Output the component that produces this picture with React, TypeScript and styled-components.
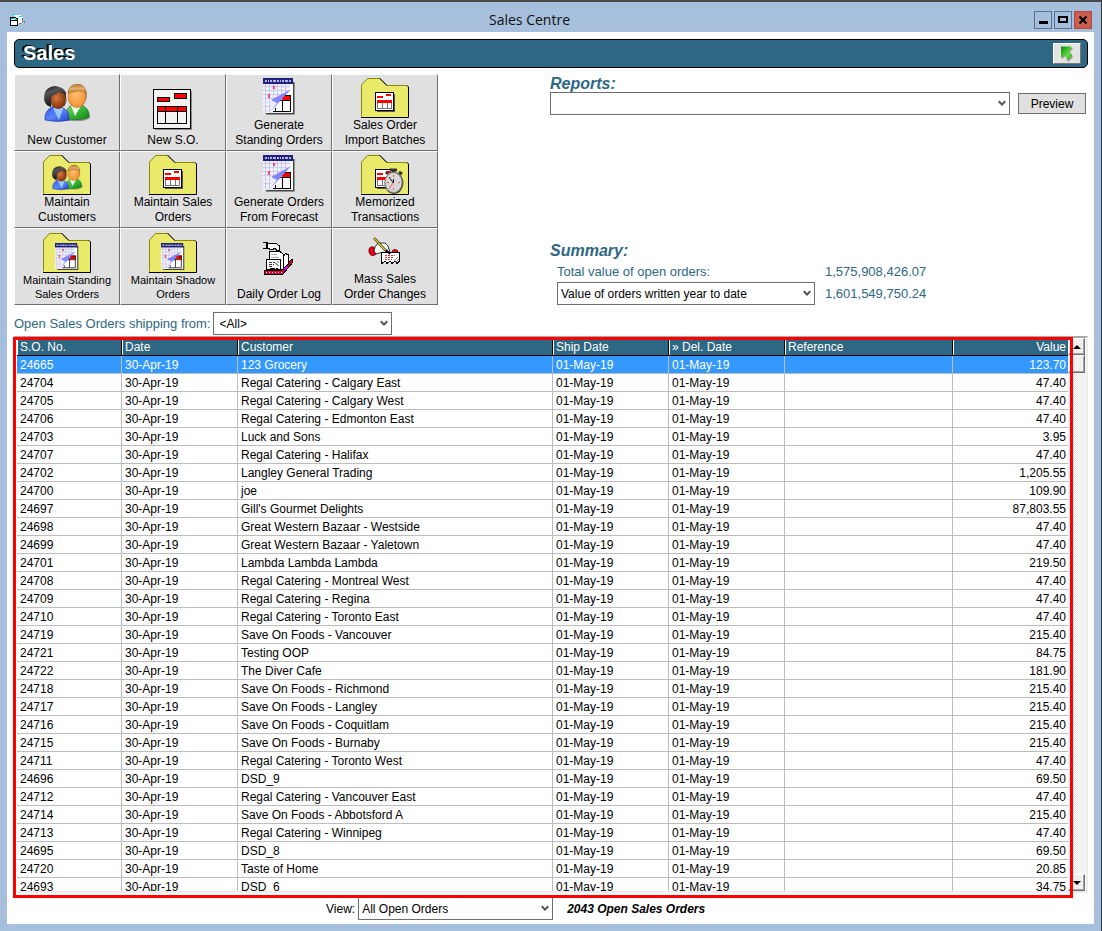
import React from 'react';
import styled, { createGlobalStyle } from 'styled-components';

const teal = '#2e6783';
const sans = '"Liberation Sans", Arial, sans-serif';

const GlobalStyle = createGlobalStyle`
  * { box-sizing: border-box; }
  body { margin: 0; font-family: ${sans}; font-size: 12px; color: #000; }
  button, select { font-family: inherit; font-size: inherit; color: inherit; margin: 0; padding: 0; }
`;

/* ---------- window frame ---------- */

const Window = styled.div`
  display: flex;
  flex-direction: column;
  height: 100vh;
  min-height: 600px;
  padding: 0 7px 7px;
  background: #a6bfdc;
  border-top: 2px solid #4a4a4a;
  border-right: 1px solid #3a3a3a;
`;

const TitleBar = styled.header`
  display: flex;
  align-items: center;
  height: 30px;
  padding: 6px 2px 0 3px;
  flex: none;
`;

const WindowTitle = styled.h1`
  flex: 1;
  margin: 0;
  text-align: center;
  font: 400 14px/20px "Open Sans", "Noto Sans", sans-serif;
  color: #111;
`;

const WindowButtons = styled.div`
  display: flex;
  gap: 2px;
`;

const WindowButton = styled.button<{ $close?: boolean }>`
  display: flex;
  align-items: center;
  justify-content: center;
  width: 18px;
  height: 18px;
  border: 1px solid ${p => (p.$close ? '#b04a40' : '#5b7390')};
  background: ${p => (p.$close ? '#cb5f4f' : '#a6bfdc')};
`;

const Content = styled.main`
  display: flex;
  flex-direction: column;
  flex: 1;
  min-height: 0;
  padding: 7px 6px 4px 7px;
  background: #fff;
`;

/* ---------- banner ---------- */

const Banner = styled.div`
  display: flex;
  align-items: center;
  justify-content: space-between;
  flex: none;
  height: 29px;
  padding: 0 6px 0 8px;
  border: 1px solid #000;
  border-radius: 5px;
  background: ${teal};
`;

const BannerTitle = styled.h2`
  margin: 0;
  padding-bottom: 2px;
  font-size: 20px;
  line-height: 24px;
  color: #fff;
  text-shadow: -1px -1px 0 #000, -2px -1px 0 #000;
`;

const BannerButton = styled.button`
  display: flex;
  align-items: center;
  justify-content: center;
  width: 28px;
  height: 21px;
  background: #e3e3e3;
  border: 1px solid;
  border-color: #fff #777 #777 #fff;
`;

/* ---------- upper part ---------- */

const Upper = styled.div`
  display: flex;
  flex: none;
  gap: 112px;
  padding: 6px 2px 0 0;
`;

const TileGrid = styled.nav`
  display: grid;
  grid-template-columns: repeat(4, 106px);
  grid-auto-rows: 77px;
`;

const Tile = styled.button`
  display: flex;
  flex-direction: column;
  align-items: center;
  padding: 2px 0 2px;
  background: #e0e0e0;
  border: 1px solid;
  border-color: #fff #6e6e6e #6e6e6e #fff;
`;

const TileIcon = styled.span<{ $small?: boolean }>`
  display: flex;
  flex: 1;
  align-items: center;
  min-height: 0;
  padding-top: ${p => (p.$small ? 2 : 0)}px;
`;

const TileLabel = styled.span<{ $small?: boolean }>`
  display: flex;
  flex-direction: column;
  padding-bottom: ${p => (p.$small ? 1 : 0)}px;
  font-size: ${p => (p.$small ? 11 : 12)}px;
  line-height: ${p => (p.$small ? 14 : 15)}px;
  white-space: nowrap;
`;

const SidePanel = styled.div`
  display: flex;
  flex-direction: column;
  justify-content: space-between;
  flex: 1;
  min-width: 0;
`;

const Heading = styled.h3`
  margin: 0;
  padding-top: 2px;
  font-size: 16px;
  line-height: 16px;
  font-style: italic;
  color: ${teal};
`;

const ReportRow = styled.div`
  display: flex;
  align-items: center;
  gap: 8px;
`;

const PreviewButton = styled.button`
  width: 68px;
  height: 21px;
  background: #e0e0e0;
  border: 1px solid #6e6e6e;
`;

const SummaryGrid = styled.div`
  display: grid;
  grid-template-columns: 258px auto;
  grid-template-rows: 18px 23px;
  column-gap: 10px;
  row-gap: 2px;
  justify-content: start;
  align-items: center;
  padding: 3px 0 0 7px;
  font-size: 13px;
  color: ${teal};
`;

const Amount = styled.output``;

/* ---------- drop-downs ---------- */

const SelectBox = styled.span<{ $width?: number }>`
  position: relative;
  display: block;
  ${p => (p.$width ? `width: ${p.$width}px;` : 'flex: 1;')}
  height: 23px;
  font-size: 12px;
  color: #000;
  svg {
    position: absolute;
    right: 4px;
    top: 8px;
    pointer-events: none;
  }
`;

const NativeSelect = styled.select<{ $inset?: number }>`
  appearance: none;
  display: block;
  width: 100%;
  height: 100%;
  padding: 0 18px 0 ${p => p.$inset ?? 3}px;
  border: 1px solid #6e6e6e;
  border-radius: 0;
  background: #fff;
`;

const FilterRow = styled.div`
  display: flex;
  flex: none;
  align-items: center;
  gap: 2px;
  padding: 7px 0 1px;
`;

const FilterLabel = styled.label`
  font-size: 13px;
  color: ${teal};
`;

/* ---------- order list ---------- */

const GridFrame = styled.section`
  position: relative;
  display: flex;
  flex: 1;
  min-height: 0;
  border: 2px solid;
  border-color: #a8a8a8 #ececec #ececec #a8a8a8;
  padding: 0 1px;
`;

const Highlight = styled.div`
  position: absolute;
  z-index: 2;
  top: -1px;
  left: -3px;
  right: 13px;
  bottom: -7px;
  border: 3px solid #ff0000;
  pointer-events: none;
`;

const TableView = styled.div`
  flex: 1;
  min-width: 0;
  overflow: hidden;
`;

const Table = styled.table`
  width: 100%;
  table-layout: fixed;
  border-collapse: separate;
  border-spacing: 0;
`;

const Col = styled.col<{ $width?: number }>`
  ${p => p.$width && `width: ${p.$width}px;`}
`;

const HeadCell = styled.th<{ $right?: boolean }>`
  height: 18px;
  padding: 2px 2px 0 3px;
  line-height: 15px;
  font-weight: 400;
  text-align: ${p => (p.$right ? 'right' : 'left')};
  color: #fff;
  background: ${teal};
  border-right: 1px solid #000;
  border-bottom: 1px solid #000;
  box-shadow: inset 1px 0 0 #fff;
  &:last-child { border-right: 0; }
`;

const Cell = styled.td<{ $right?: boolean }>`
  height: 18px;
  padding: 2px 2px 0 3px;
  line-height: 15px;
  white-space: nowrap;
  text-align: ${p => (p.$right ? 'right' : 'left')};
  border-right: 1px solid #bdbdbd;
  border-bottom: 1px solid #bdbdbd;
  &:last-child { border-right: 0; }
`;

const Row = styled.tr<{ $selected?: boolean }>`
  ${p => p.$selected && 'background: #3399ff; color: #fff;'}
`;

const ScrollTrack = styled.div`
  display: flex;
  flex-direction: column;
  width: 17px;
  background: repeating-conic-gradient(#e6e6e6 0 25%, #fff 0 50%) 0 0 / 2px 2px;
`;

const ScrollButton = styled.button`
  display: flex;
  align-items: center;
  justify-content: center;
  width: 17px;
  height: 17px;
  background: #f0f0f0;
  border: 1px solid;
  border-color: #fff #6e6e6e #6e6e6e #fff;
  box-shadow: inset -1px -1px 0 #a8a8a8;
`;

const ScrollThumb = styled.div`
  height: 18px;
  margin-bottom: auto;
  background: #f0f0f0;
  border: 1px solid;
  border-color: #fff #6e6e6e #6e6e6e #fff;
  box-shadow: inset -1px -1px 0 #a8a8a8;
`;

const Footer = styled.footer`
  display: flex;
  flex: none;
  align-items: center;
  gap: 3px;
  padding: 4px 0 0 312px;
`;

const OrderCount = styled.strong`
  padding-left: 11px;
  font-style: italic;
`;

/* ---------- drawings ---------- */

const Defs = () => (
  <svg width="0" height="0" style={{ position: 'absolute' }} aria-hidden="true">
    <defs>
      <pattern id="dither" width="2" height="2" patternUnits="userSpaceOnUse">
        <rect width="2" height="2" fill="#ffff00" />
        <rect width="1" height="1" fill="#d4d4d4" />
        <rect x="1" y="1" width="1" height="1" fill="#d4d4d4" />
      </pattern>
      <radialGradient id="skinDark" cx="0.4" cy="0.35" r="0.7">
        <stop offset="0" stopColor="#d9783c" />
        <stop offset="1" stopColor="#7a2b08" />
      </radialGradient>
      <radialGradient id="skinLight" cx="0.45" cy="0.4" r="0.7">
        <stop offset="0" stopColor="#ffc070" />
        <stop offset="1" stopColor="#f08a28" />
      </radialGradient>
      <linearGradient id="hairLight" x1="0" y1="0" x2="0" y2="1">
        <stop offset="0" stopColor="#b87420" />
        <stop offset="0.5" stopColor="#e0b070" />
        <stop offset="1" stopColor="#c08030" />
      </linearGradient>
      <linearGradient id="hairDark" x1="0" y1="0" x2="0.4" y2="1">
        <stop offset="0" stopColor="#151515" />
        <stop offset="0.35" stopColor="#555" />
        <stop offset="1" stopColor="#0c0c0c" />
      </linearGradient>
      <linearGradient id="shirtBlue" x1="0" y1="0" x2="1" y2="1">
        <stop offset="0" stopColor="#2f55e8" />
        <stop offset="0.5" stopColor="#5b86ff" />
        <stop offset="1" stopColor="#1d3fc8" />
      </linearGradient>
      <linearGradient id="shirtGreen" x1="0" y1="0" x2="1" y2="1">
        <stop offset="0" stopColor="#7fd36a" />
        <stop offset="0.6" stopColor="#2fae2f" />
        <stop offset="1" stopColor="#0d7a14" />
      </linearGradient>
      <linearGradient id="arrowGreen" x1="0" y1="0" x2="1" y2="1">
        <stop offset="0" stopColor="#0e8a0e" />
        <stop offset="0.6" stopColor="#5fe03a" />
        <stop offset="1" stopColor="#1d9a1d" />
      </linearGradient>
    </defs>
  </svg>
);

const PeopleShapes = () => (
  <g>
    <path d="M23 37 Q20 26 29 22 L39 22 Q46 25 46 34 Q40 38 30 37 Z" fill="#555" opacity="0.55" />
    <path d="M21 36 Q20 25 28 21 L38 21 Q45 24 45 33 Q38 37 21 35 Z" fill="url(#shirtGreen)" stroke="#1b6a1b" strokeWidth="0.6" />
    <path d="M27 22 L31 32 L37 22 Z" fill="#e8ffe8" />
    <path d="M42 6 Q44 12 41 18 L37 23 L39 10 Z" fill="#555" opacity="0.7" />
    <ellipse cx="33" cy="12.500" rx="9" ry="11" fill="url(#skinLight)" stroke="#b06a20" strokeWidth="0.6" />
    <path d="M24 9 Q25 0 34 0 Q42 1 42 9 Q38 6 33 7 Q27 8 24 9 Z" fill="url(#hairLight)" stroke="#8a5a18" strokeWidth="0.5" />
    <path d="M1 36 Q0 27 8 23 L17 23 Q26 26 25 36 Q14 39 1 36 Z" fill="url(#shirtBlue)" stroke="#1a2f9c" strokeWidth="0.6" />
    <path d="M9 24 L15 36 L19 24 Z" fill="#9cc8ff" />
    <path d="M0 14 Q0 3 11 2 Q21 3 22 10 L20 12 L9 12 L7 23 Q0 21 0 14 Z" fill="url(#hairDark)" />
    <path d="M8 12 Q12 10 15 8 Q18 10 21 10 Q23 24 14 25 Q6 24 7 14 Z" fill="url(#skinDark)" />
    <path d="M21 8 L22 17 L20 22" fill="none" stroke="#300" strokeWidth="0.8" />
  </g>
);

const PeopleIcon = () => (
  <svg width="47" height="42" viewBox="0 0 47 42"><PeopleShapes /></svg>
);

const OrderSheetIcon = () => (
  <svg width="40" height="52" viewBox="0 0 40 52" shapeRendering="crispEdges">
    <g transform="translate(0 10)">
      <path d="M2 40.500 H38.500 V2" fill="none" stroke="#8a8a8a" />
      <rect x="0.500" y="0.500" width="37" height="39" fill="#f3f3f3" stroke="#000" />
      <rect x="4.500" y="8.500" width="12" height="4" fill="#f00" stroke="#000" />
      <rect x="21.500" y="4.500" width="12" height="5" fill="#f00" stroke="#000" />
      <rect x="4.500" y="17.500" width="29" height="17" fill="#f3f3f3" stroke="#000" />
      <rect x="4.500" y="17.500" width="29" height="5" fill="#f00" stroke="#000" />
      <path d="M12.500 18 V35 M24.500 18 V35" stroke="#000" />
    </g>
  </svg>
);

const CalendarShapes = () => (
  <g>
    <path d="M3 35.500 H30.500 V4" fill="none" stroke="#444" strokeWidth="2" />
    <rect x="1" y="6" width="29" height="29" fill="#fff" />
    <rect x="0" y="6" width="27" height="29" fill="#ececfa" />
    <g stroke="#fff" strokeWidth="1">
      <path d="M0 10.500 H27 M0 14.500 H23 M0 18.500 H17 M0 22.500 H11 M0 26.500 H8 M0 30.500 H9 M0 34.500 H8" />
    </g>
    <g stroke="#c3c3ee" strokeWidth="1">
      <path d="M2.500 6 V35 M6.500 6 V35 M10.500 6 V22 M14.500 6 V19 M18.500 6 V17 M22.500 6 V14" />
      <path d="M0 8.500 H27 M0 12.500 H24 M0 16.500 H19 M0 20.500 H12 M0 28.500 H8" opacity="0.7" />
    </g>
    <path d="M29 11 L29 34 H8 Z" fill="#fff" />
    <rect x="19" y="17" width="9" height="5" fill="#f00" />
    <path d="M20 17.500 H28 M13 22.500 H28 M27.500 17 V33 M10 33.500 H28 M19.500 22 V33 M12.500 30 V33" fill="none" stroke="#000" />
    <path d="M28 11 L8 22 L14 25 L7 34 Z" fill="#8484ff" />
    <path d="M10 8 L12 11 M12 8 L10 11 M5 16 L7 20 M7 16 L5 20" stroke="#f03050" />
    <rect x="0" y="0" width="30" height="6" fill="#22227e" />
    <path d="M2 3 H28" stroke="#b4b4e0" strokeWidth="2" strokeDasharray="2 1 1 1 2 1 3 1" />
  </g>
);

const CalendarIcon = () => (
  <svg width="32" height="40" viewBox="0 0 32 40"><CalendarShapes /></svg>
);

const FolderIcon = ({ children }: { children: React.ReactNode }) => (
  <svg width="49" height="42" viewBox="0 0 49 42">
    <path d="M0.500 39.500 V8 L6.500 1.500 H18.500 L25.500 8.500 H46.500 V39.500 Z" fill="url(#dither)" shapeRendering="crispEdges" />
    <path d="M0.500 39.500 V8 L6.500 1.500 H18.500 L25.500 8.500 H46.500" fill="none" stroke="#8a8a00" />
    <path d="M18.500 1 L26 8.500 M46 8.500 L47.500 10 V40.500 H0" fill="none" stroke="#000" />
    {children}
  </svg>
);

const MiniOrder = () => (
  <g shapeRendering="crispEdges">
    <path d="M16 34.500 H33.500 V17" fill="none" stroke="#555" strokeWidth="1" />
    <rect x="14.500" y="15.500" width="18" height="18" fill="#fff" stroke="#000" />
    <path d="M16 20 H22 M25 18 H30" stroke="#f00" strokeWidth="2" />
    <rect x="16" y="23" width="15" height="3" fill="#f00" />
    <path d="M16.500 26 V32 M21.500 26 V32 M26.500 26 V32 M30.500 26 V32 M16 31.500 H31" stroke="#777" />
  </g>
);

const MiniPeople = () => (
  <g transform="translate(9 11) scale(0.660)"><PeopleShapes /></g>
);

const MiniCalendar = () => (
  <g transform="translate(12 11) scale(0.740)"><CalendarShapes /></g>
);

const Stopwatch = () => (
  <g>
    <path d="M29 16 H36 M32.500 16 V19 M25 20 L27 18 M38 18 L41 20" stroke="#333" strokeWidth="3" />
    <ellipse cx="33" cy="29" rx="9.500" ry="11" fill="#4a4a4a" />
    <ellipse cx="32.500" cy="28.500" rx="8.500" ry="10" fill="#d8d8d8" stroke="#888" />
    <path d="M32.500 21 V23 M32.500 34 V36 M26 28.500 H28 M37 28.500 H39 M28 35 L32 29" stroke="#f05050" />
    <path d="M28 23 L32.500 29 V25" fill="none" stroke="#111" />
  </g>
);

const LogIcon = () => (
  <svg width="32" height="34" viewBox="0 0 32 34" shapeRendering="crispEdges">
    <path d="M1 28 H19 L29 17 L30 20 L20 32 H1 Z" fill="#e00030" stroke="#000" />
    <path d="M3 30.500 H19" stroke="#fff" strokeDasharray="1 2" />
    <path d="M19 25 L24 22 L25 26 L21 29 Z" fill="#e000e0" />
    <path d="M6.500 9.500 H17 L20 12 V27.500 H6.500 Z" fill="#fff" stroke="#000" />
    <path d="M20.500 14 L22.500 11.500 L25.500 13 V22 L21 26" fill="#fff" stroke="#000" />
    <path d="M3.500 17.500 H17 V27.500 H3.500 Z" fill="#fff" stroke="#000" />
    <path d="M8 12.500 H14 M8 15 H16" stroke="#aaa" />
    <path d="M6 20.500 H12 M6 22.500 H11 M6 24.500 H10" stroke="#333" strokeDasharray="3 1" />
    <path d="M12 21 L16 24 M14 19 L16 21" stroke="#888" />
    <path d="M6 28 L8 26 H11 V28 M13 28 V26 H15" fill="none" stroke="#000" />
    <path d="M4 1.500 H13 L16.500 4 V8 L14 9 L12 6 L9 8 L4 6 Z" fill="#fff" stroke="#000" />
    <path d="M0 0.500 H4 M0 6.500 H4" stroke="#000" />
    <path d="M3.500 0 V7" stroke="#000" strokeWidth="2" />
  </svg>
);

const MassChangeIcon = () => (
  <svg width="34" height="30" viewBox="0 0 34 30">
    <path d="M6 10 Q0 9 1 15 Q2 20 7 18 L9 16 L6 14 Z" fill="#f00018" stroke="#400" strokeWidth="0.700" />
    <path d="M7 10 L10 6 H17 L20 9 L22 15 L18 17 L15 15 L8 17 L6 14 Z" fill="#fff" stroke="#000" strokeWidth="0.800" />
    <ellipse cx="27" cy="15" rx="3" ry="2.500" fill="#f00018" stroke="#400" strokeWidth="0.700" />
    <path d="M13.500 15.500 H31.500 V24 L29 26.500 L27 24 L24 26.500 L22 24 L19 26.500 L17 24 L14 26.500 Z" fill="#fff" stroke="#000" shapeRendering="crispEdges" />
    <path d="M17 18.500 H27 M17 20.500 H26 M17 22.500 H24" stroke="#f03030" strokeDasharray="2 1" />
    <path d="M26 24 L30 20 M28 25 L31 22" stroke="#999" />
    <path d="M6 1 L19 15" stroke="#000" strokeWidth="2.500" />
    <path d="M6 1 L18 14" stroke="#e8e020" strokeWidth="1.200" />
    <path d="M18 13 L22 17" stroke="#102" strokeWidth="2" />
  </svg>
);

const AppIcon = () => (
  <svg width="15" height="14" viewBox="0 0 15 14" shapeRendering="crispEdges">
    <path d="M4 2 H11 L13 5 V11 H8 Z" fill="#fff" />
    <path d="M3 1.500 H6 M8 1.500 H9 M9 3.500 H12" stroke="#00e8f0" />
    <path d="M12.500 5 V10 M14 8 V10 M9 10.500 H12" stroke="#777" />
    <path d="M0.500 4.500 H5 L7.500 6 V12.500 L5 12 H0.500 Z" fill="#fff" stroke="#000" />
    <path d="M1 5.500 H5 M5 6.500 H7" stroke="#00c8d8" />
    <path d="M1 7.500 H7" stroke="#000" />
  </svg>
);

const GreenArrow = () => (
  <svg width="14" height="16" viewBox="0 0 14 16">
    <path d="M3 2 H13 L10 6 L13 11 L8 16 L6 10 L2 13 Z" fill="#777" opacity="0.7" />
    <path d="M1 0.500 H12 L9 5 L12 9.500 L7 14.500 L5.500 8.500 L1 12 Z" fill="url(#arrowGreen)" />
  </svg>
);

const Chevron = () => (
  <svg width="8" height="7" viewBox="0 0 8 7">
    <path d="M0.800 1.200 L4 4.600 L7.200 1.200" fill="none" stroke="#505050" strokeWidth="2" />
  </svg>
);

const Triangle = ({ down }: { down?: boolean }) => (
  <svg width="8" height="4" viewBox="0 0 8 4">
    <path d={down ? 'M0 0 H8 L4 4 Z' : 'M0 4 H8 L4 0 Z'} fill="#000" />
  </svg>
);

/* ---------- data ---------- */

type TileInfo = { lines: string[]; icon: React.ReactNode; small?: boolean };

const tiles: TileInfo[] = [
  { lines: ['New Customer'], icon: <PeopleIcon /> },
  { lines: ['New S.O.'], icon: <OrderSheetIcon /> },
  { lines: ['Generate', 'Standing Orders'], icon: <CalendarIcon /> },
  { lines: ['Sales Order', 'Import Batches'], icon: <FolderIcon><MiniOrder /></FolderIcon> },
  { lines: ['Maintain', 'Customers'], icon: <FolderIcon><MiniPeople /></FolderIcon> },
  { lines: ['Maintain Sales', 'Orders'], icon: <FolderIcon><MiniOrder /></FolderIcon> },
  { lines: ['Generate Orders', 'From Forecast'], icon: <CalendarIcon /> },
  { lines: ['Memorized', 'Transactions'], icon: <FolderIcon><MiniOrder /><Stopwatch /></FolderIcon> },
  { lines: ['Maintain Standing', 'Sales Orders'], icon: <FolderIcon><MiniCalendar /></FolderIcon>, small: true },
  { lines: ['Maintain Shadow', 'Orders'], icon: <FolderIcon><MiniCalendar /></FolderIcon>, small: true },
  { lines: ['Daily Order Log'], icon: <LogIcon /> },
  { lines: ['Mass Sales', 'Order Changes'], icon: <MassChangeIcon /> },
];

const orders: [string, string, string][] = [
  ['24665', '123 Grocery', '123.70'],
  ['24704', 'Regal Catering - Calgary East', '47.40'],
  ['24705', 'Regal Catering - Calgary West', '47.40'],
  ['24706', 'Regal Catering - Edmonton East', '47.40'],
  ['24703', 'Luck and Sons', '3.95'],
  ['24707', 'Regal Catering - Halifax', '47.40'],
  ['24702', 'Langley General Trading', '1,205.55'],
  ['24700', 'joe', '109.90'],
  ['24697', "Gill's Gourmet Delights", '87,803.55'],
  ['24698', 'Great Western Bazaar - Westside', '47.40'],
  ['24699', 'Great Western Bazaar - Yaletown', '47.40'],
  ['24701', 'Lambda Lambda Lambda', '219.50'],
  ['24708', 'Regal Catering - Montreal West', '47.40'],
  ['24709', 'Regal Catering - Regina', '47.40'],
  ['24710', 'Regal Catering - Toronto East', '47.40'],
  ['24719', 'Save On Foods - Vancouver', '215.40'],
  ['24721', 'Testing OOP', '84.75'],
  ['24722', 'The Diver Cafe', '181.90'],
  ['24718', 'Save On Foods - Richmond', '215.40'],
  ['24717', 'Save On Foods - Langley', '215.40'],
  ['24716', 'Save On Foods - Coquitlam', '215.40'],
  ['24715', 'Save On Foods - Burnaby', '215.40'],
  ['24711', 'Regal Catering - Toronto West', '47.40'],
  ['24696', 'DSD_9', '69.50'],
  ['24712', 'Regal Catering - Vancouver East', '47.40'],
  ['24714', 'Save On Foods - Abbotsford A', '215.40'],
  ['24713', 'Regal Catering - Winnipeg', '47.40'],
  ['24695', 'DSD_8', '69.50'],
  ['24720', 'Taste of Home', '20.85'],
  ['24693', 'DSD_6', '34.75'],
];

const columns: { title: string; width?: number; right?: boolean }[] = [
  { title: 'S.O. No.', width: 105 },
  { title: 'Date', width: 116 },
  { title: 'Customer' },
  { title: 'Ship Date', width: 116 },
  { title: '» Del. Date', width: 116 },
  { title: 'Reference', width: 168 },
  { title: 'Value', width: 115, right: true },
];

type DropDownProps = { id: string; value: string; width?: number; label?: string; inset?: number };

const DropDown = ({ id, value, width, label, inset }: DropDownProps) => (
  <SelectBox $width={width}>
    <NativeSelect id={id} aria-label={label} defaultValue={value} $inset={inset}>
      <option value={value}>{value}</option>
    </NativeSelect>
    <Chevron />
  </SelectBox>
);

export default function App() {
  return (
    <>
      <GlobalStyle />
      <Defs />
      <Window>
        <TitleBar>
          <AppIcon />
          <WindowTitle>Sales Centre</WindowTitle>
          <WindowButtons>
            <WindowButton aria-label="Minimize">
              <svg width="10" height="10"><path d="M1 7.500 H10" stroke="#000" strokeWidth="3" /></svg>
            </WindowButton>
            <WindowButton aria-label="Maximize">
              <svg width="10" height="10"><rect x="1" y="2" width="8" height="5" fill="none" stroke="#000" strokeWidth="2" /></svg>
            </WindowButton>
            <WindowButton aria-label="Close" $close>
              <svg width="10" height="10"><path d="M1.500 1.500 L8.500 8.500 M8.500 1.500 L1.500 8.500" stroke="#000" strokeWidth="2.200" /></svg>
            </WindowButton>
          </WindowButtons>
        </TitleBar>

        <Content>
          <Banner>
            <BannerTitle>Sales</BannerTitle>
            <BannerButton aria-label="Back"><GreenArrow /></BannerButton>
          </Banner>

          <Upper>
            <TileGrid aria-label="Sales tasks">
              {tiles.map(t => (
                <Tile key={t.lines.join(' ')}>
                  <TileIcon $small={t.small} aria-hidden="true">{t.icon}</TileIcon>
                  <TileLabel $small={t.small}>
                    {t.lines.map(l => <span key={l}>{l}</span>)}
                  </TileLabel>
                </Tile>
              ))}
            </TileGrid>

            <SidePanel>
              <section>
                <Heading>Reports:</Heading>
                <ReportRow>
                  <DropDown id="report" value="" label="Report" />
                  <PreviewButton>Preview</PreviewButton>
                </ReportRow>
              </section>
              <section>
                <Heading>Summary:</Heading>
                <SummaryGrid>
                  <label htmlFor="openTotal">Total value of open orders:</label>
                  <Amount id="openTotal">1,575,908,426.07</Amount>
                  <DropDown id="measure" value="Value of orders written year to date" width={258} label="Summary measure" />
                  <Amount>1,601,549,750.24</Amount>
                </SummaryGrid>
              </section>
            </SidePanel>
          </Upper>

          <FilterRow>
            <FilterLabel htmlFor="shipFrom">Open Sales Orders shipping from:</FilterLabel>
            <DropDown id="shipFrom" value="<All>" width={179} inset={6} />
          </FilterRow>

          <GridFrame>
            <TableView>
              <Table>
                <colgroup>
                  {columns.map(c => <Col key={c.title} $width={c.width} />)}
                </colgroup>
                <thead>
                  <tr>
                    {columns.map(c => <HeadCell key={c.title} $right={c.right}>{c.title}</HeadCell>)}
                  </tr>
                </thead>
                <tbody>
                  {orders.map(([no, customer, value], i) => (
                    <Row key={no} $selected={i === 0}>
                      <Cell>{no}</Cell>
                      <Cell>30-Apr-19</Cell>
                      <Cell>{customer}</Cell>
                      <Cell>01-May-19</Cell>
                      <Cell>01-May-19</Cell>
                      <Cell />
                      <Cell $right>{value}</Cell>
                    </Row>
                  ))}
                </tbody>
              </Table>
            </TableView>
            <ScrollTrack>
              <ScrollButton aria-label="Scroll up"><Triangle /></ScrollButton>
              <ScrollThumb />
              <ScrollButton aria-label="Scroll down"><Triangle down /></ScrollButton>
            </ScrollTrack>
            <Highlight />
          </GridFrame>

          <Footer>
            <label htmlFor="view">View:</label>
            <DropDown id="view" value="All Open Orders" width={195} />
            <OrderCount>2043 Open Sales Orders</OrderCount>
          </Footer>
        </Content>
      </Window>
    </>
  );
}
